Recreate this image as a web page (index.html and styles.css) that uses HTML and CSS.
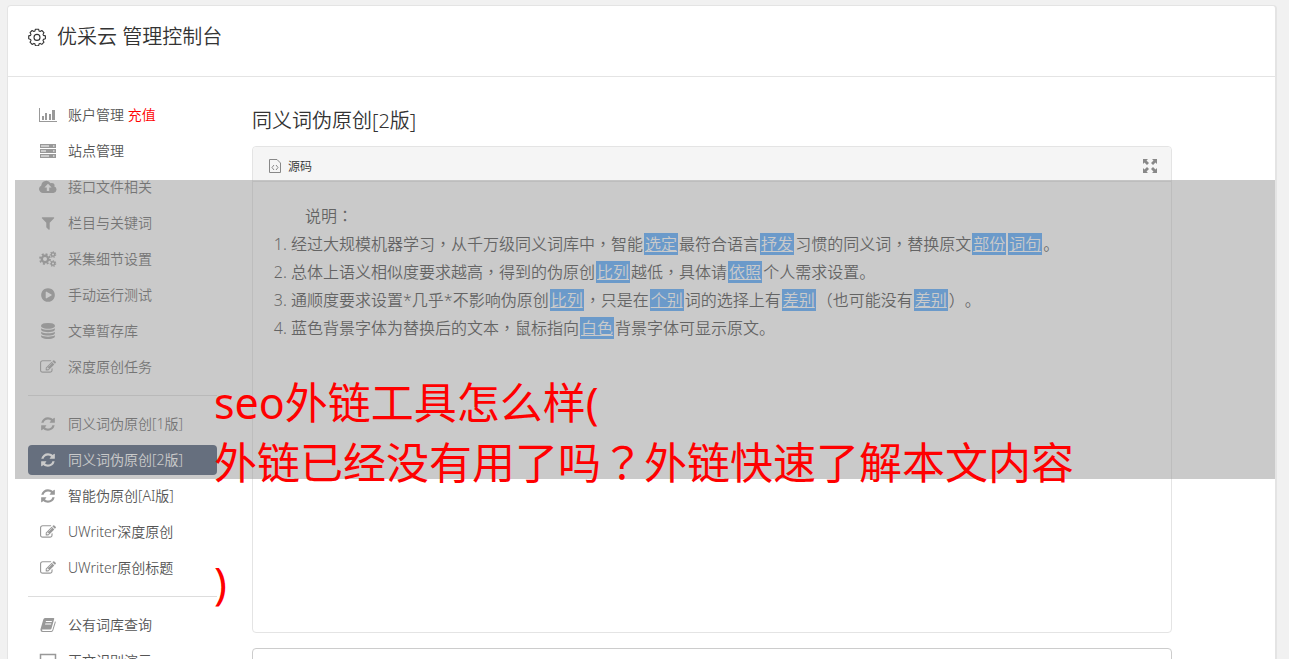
FILE: index.html
```html
<!DOCTYPE html>
<html lang="zh-CN">
<head>
    <meta charset="UTF-8">
    <meta name="viewport" content="width=device-width, initial-scale=1.0">
    <title>优采云 管理控制台</title>
    <link rel="stylesheet" href="styles.css">
</head>
<body>
    <!-- Icons -->
    <svg class="sprite" aria-hidden="true">
        <symbol id="gear" viewBox="0 0 18 18">
            <path fill="none" stroke="currentColor" stroke-width="1.1" stroke-linejoin="round" d="M7.4 1.2h3.2l.5 1.9 1 .4 1.7-1 2.2 2.1-1 1.8.4 1 2 .5v2.9l-2 .6-.4 1 1 1.8-2.2 2.2-1.7-1-1 .4-.5 1.9H7.4l-.5-1.900-1-.400-1.800 1L2 14.200l1-1.800-.4-1-1.900-.600V7.900l1.900-.500.400-1-1-1.800 2.100-2.100 1.800 1 1-.400z"/>
            <circle cx="9" cy="9.400" r="3" fill="none" stroke="currentColor" stroke-width="1.1"/>
        </symbol>
        <symbol id="chart" viewBox="0 0 18 16">
            <path d="M0 1h1v13h17v1H0zM3 9h2v4H3zM6 6h2v7H6zM10 7h2v6h-2zM13 3h3v10h-3z"/>
        </symbol>
        <symbol id="server" viewBox="0 0 16 16">
            <path fill-rule="evenodd" d="M0 1h16v4H0zM1 2.500v1h8v-1zM13 2.500v1h1.500v-1zM0 6h16v4H0zM1 7.500v1h5v-1zM13 7.500v1h1.500v-1zM0 11h16v4H0zM1 12.500v1h8v-1zM13 12.500v1h1.500v-1z"/>
        </symbol>
        <symbol id="cloud" viewBox="0 0 18 16">
            <path fill-rule="evenodd" d="M4 14a4 4 0 0 1-1.700-7.600A5 5 0 0 1 11.600 4.300a2.600 2.600 0 0 1 3.700 3.300A3.300 3.300 0 0 1 14.500 14zM9 4.800L5.400 8.500h2.400V12h2.400V8.500h2.400z"/>
        </symbol>
        <symbol id="filter" viewBox="0 0 1792 1792">
            <path d="M1595 295q17 41-14 70l-493 493v742q0 42-39 59-13 5-25 5-27 0-45-19l-256-256q-19-19-19-45v-486l-493-493q-31-29-14-70 17-39 59-39h1280q42 0 59 39z"/>
        </symbol>
        <symbol id="cogs" viewBox="0 0 18 16">
            <g fill="none" stroke="currentColor">
                <circle cx="6" cy="8" r="3.200" stroke-width="2.400"/>
                <circle cx="6" cy="8" r="5" stroke-width="1.800" stroke-dasharray="2 1.927"/>
                <circle cx="14" cy="3.500" r="1.700" stroke-width="1.400"/>
                <circle cx="14" cy="3.500" r="2.700" stroke-width="1.200" stroke-dasharray="1.300 1.120"/>
                <circle cx="14" cy="12.500" r="1.700" stroke-width="1.400"/>
                <circle cx="14" cy="12.500" r="2.700" stroke-width="1.200" stroke-dasharray="1.300 1.120"/>
            </g>
        </symbol>
        <symbol id="play" viewBox="0 0 1792 1792">
            <path d="M896 128q209 0 385.500 103t279.500 279.500 103 385.500-103 385.500-279.500 279.500-385.500 103-385.500-103-279.500-279.500-103-385.500 103-385.500 279.500-279.500 385.500-103zm384 823q32-18 32-55t-32-55l-544-320q-31-19-64-1-32 19-32 56v640q0 37 32 56 16 8 32 8 17 0 32-9z"/>
        </symbol>
        <symbol id="database" viewBox="0 0 1792 1792">
            <path d="M896 768q237 0 443-43t325-127v170q0 69-103 128t-280 93.500-385 34.500-385-34.500-280-93.500-103-128v-170q119 84 325 127t443 43zm0 768q237 0 443-43t325-127v170q0 69-103 128t-280 93.500-385 34.500-385-34.500-280-93.500-103-128v-170q119 84 325 127t443 43zm0-384q237 0 443-43t325-127v170q0 69-103 128t-280 93.500-385 34.500-385-34.500-280-93.500-103-128v-170q119 84 325 127t443 43zm0-1152q208 0 385 34.500t280 93.500 103 128v128q0 69-103 128t-280 93.500-385 34.500-385-34.500-280-93.500-103-128v-128q0-69 103-128t280-93.500 385-34.500z"/>
        </symbol>
        <symbol id="edit" viewBox="0 0 1792 1792">
            <path d="M888 1184l116-116-152-152-116 116v56h96v96h56zm440-720q-16-16-33 1l-350 350q-17 17-1 33t33-1l350-350q17-17 1-33zm80 594v190q0 119-84.500 203.500t-203.500 84.500h-832q-119 0-203.500-84.500t-84.500-203.500v-832q0-119 84.500-203.500t203.500-84.500h832q63 0 117 25 15 7 18 23 3 17-9 29l-49 49q-14 14-32 8-23-6-45-6h-832q-66 0-113 47t-47 113v832q0 66 47 113t113 47h832q66 0 113-47t47-113v-126q0-13 9-22l64-64q15-15 35-7t20 29zm-96-738l288 288-672 672h-288v-288zm444 132l-92 92-288-288 92-92q28-28 68-28t68 28l152 152q28 28 28 68t-28 68z"/>
        </symbol>
        <symbol id="refresh" viewBox="0 0 1792 1792">
            <path d="M1639 1056q0 5-1 7-64 268-268 434.500t-478 166.500q-146 0-282.500-55t-243.500-157l-129 129q-19 19-45 19t-45-19-19-45v-448q0-26 19-45t45-19h448q26 0 45 19t19 45-19 45l-137 137q71 66 161 102t187 36q134 0 250-65t186-179q11-17 53-117 8-23 30-23h192q13 0 22.500 9.500t9.500 22.500zm25-800v448q0 26-19 45t-45 19h-448q-26 0-45-19t-19-45 19-45l138-138q-148-137-349-137-134 0-250 65t-186 179q-11 17-53 117-8 23-30 23h-199q-13 0-22.500-9.500t-9.500-22.500v-7q65-268 270-434.500t480-166.500q146 0 284 55.500t245 156.500l130-129q19-19 45-19t45 19 19 45z"/>
        </symbol>
        <symbol id="book" viewBox="0 0 16 16">
            <path fill-rule="evenodd" d="M5 1h8.500q1 0 .700 1L11.500 11.500q-.300 1-1.300 1H2.500q-1 0-.500.800.300.700 1 .700h8.300q.700 0 1-.800L15 4.300q1 .300.700 1.300l-2.500 8q-.400 1.400-1.800 1.400H2.600Q.400 15 .400 12.500L3.300 2.500Q3.700 1 5 1zM6 4l-.300 1h6l.300-1zM5.300 6.500l-.300 1h6l.300-1z"/>
        </symbol>
        <symbol id="screen" viewBox="0 0 18 16">
            <path fill="none" stroke="currentColor" stroke-width="1.500" d="M1.500 1.500h15v10h-15zM5 15h8M9 12v3"/>
        </symbol>
        <symbol id="source" viewBox="0 0 12 14">
            <path fill="none" stroke="currentColor" d="M.5.5h7.500l3.500 3.500v9.500H.5zM5 6L3 8.500 5 11M7 6l2 2.500L7 11"/>
        </symbol>
        <symbol id="expand" viewBox="0 0 14 14">
            <path d="M0 0h5L3.500 1.500 6 4 4 6 1.500 3.500 0 5zM14 0v5l-1.500-1.500L10 6 8 4l2.500-2.500L9 0zM0 14V9l1.500 1.500L4 8l2 2-2.500 2.500L5 14zM14 14H9l1.500-1.500L8 10l2-2 2.500 2.500L14 9z"/>
        </symbol>
    </svg>

    <div class="panel">
        <header class="panel-header">
            <svg class="icon-gear"><use href="#gear"/></svg>
            <h1>优采云 管理控制台</h1>
        </header>

        <div class="panel-body">
            <nav class="sidebar">
                <a href="#"><svg><use href="#chart"/></svg><span>账户管理 <em>充值</em></span></a>
                <a href="#"><svg><use href="#server"/></svg>站点管理</a>
                <a href="#"><svg><use href="#cloud"/></svg>接口文件相关</a>
                <a href="#"><svg><use href="#filter"/></svg>栏目与关键词</a>
                <a href="#"><svg><use href="#cogs"/></svg>采集细节设置</a>
                <a href="#"><svg><use href="#play"/></svg>手动运行测试</a>
                <a href="#"><svg><use href="#database"/></svg>文章暂存库</a>
                <a href="#"><svg><use href="#edit"/></svg>深度原创任务</a>
                <hr>
                <a href="#"><svg><use href="#refresh"/></svg>同义词伪原创[1版]</a>
                <a href="#" class="active"><svg><use href="#refresh"/></svg>同义词伪原创[2版]</a>
                <a href="#"><svg><use href="#refresh"/></svg>智能伪原创[AI版]</a>
                <a href="#"><svg><use href="#edit"/></svg>UWriter深度原创</a>
                <a href="#"><svg><use href="#edit"/></svg>UWriter原创标题</a>
                <hr>
                <a href="#"><svg><use href="#book"/></svg>公有词库查询</a>
                <a href="#"><svg><use href="#screen"/></svg>正文识别演示</a>
            </nav>

            <main class="content">
                <h2>同义词伪原创[2版]</h2>
                <div class="editor">
                    <div class="toolbar">
                        <button type="button"><svg class="icon-source"><use href="#source"/></svg>源码</button>
                        <button type="button" aria-label="全屏"><svg class="icon-expand"><use href="#expand"/></svg></button>
                    </div>
                    <div class="editor-text">
                        <p>说明<i>：</i></p>
                        <ol>
                            <li>经过大规模机器学习<i>，</i>从千万级同义词库中<i>，</i>智能<mark>选定</mark>最符合语言<mark>抒发</mark>习惯的同义词<i>，</i>替换原文<mark>部份</mark><mark>词句</mark>。</li>
                            <li>总体上语义相似度要求越高<i>，</i>得到的伪原创<mark>比列</mark>越低<i>，</i>具体请<mark>依照</mark>个人需求设置。</li>
                            <li>通顺度要求设置*几乎*不影响伪原创<mark>比列</mark><i>，</i>只是在<mark>个别</mark>词的选择上有<mark>差别</mark><i>（</i>也可能没有<mark>差别</mark><i>）</i>。</li>
                            <li>蓝色背景字体为替换后的文本<i>，</i>鼠标指向<mark>白色</mark>背景字体可显示原文。</li>
                        </ol>
                    </div>
                </div>
                <textarea class="result" aria-label="结果"></textarea>
            </main>
        </div>

        <div class="shade"></div>
        <div class="caption">
            <p>seo外链工具怎么样(</p>
            <p>外链已经没有用了吗<i>？</i>外链快速了解本文内容</p>
            <p class="caption-end">)</p>
        </div>
    </div>
</body>
</html>
```
FILE: styles.css
```css
* {
    box-sizing: border-box;
}
body {
    margin: 0;
    padding: 5px 12px 0 7px;
    height: 100vh;
    overflow: hidden;
    background-color: #f1f1f1;
    color: #333;
    font-family: "Noto Sans", "Noto Sans CJK SC", sans-serif;
    font-size: 14px;
    text-spacing-trim: space-all;
}
h1, h2 {
    margin: 0;
    font-size: 20px;
    font-weight: 350;
    line-height: 28px;
}
button {
    display: flex;
    align-items: center;
    gap: 7px;
    padding: 0;
    border: 0;
    background: none;
    color: #333;
    font: inherit;
    font-size: 12px;
    font-weight: 350;
}
svg {
    fill: currentColor;
}
/* centered punctuation */
i {
    font-family: "Noto Sans CJK TC", sans-serif;
    font-style: normal;
    line-height: 1;
    -webkit-locale: "zh-TW";
}
.sprite {
    display: none;
}
.panel {
    position: relative;
    border: 1px solid #e4e4e4;
    border-right-width: 2px;
    border-radius: 4px 4px 0 0;
    background-color: white;
}
.panel-header {
    display: flex;
    align-items: center;
    gap: 11px;
    height: 71px;
    padding: 0 20px 8px;
    border-bottom: 1px solid #e4e4e4;
}
.icon-gear {
    width: 18px;
    height: 18px;
}
.panel-body {
    display: flex;
    gap: 35px;
    padding: 23px 20px;
}
.sidebar {
    flex: 0 0 189px;
}
.sidebar a {
    display: flex;
    align-items: center;
    gap: 11px;
    height: 30px;
    margin-bottom: 6px;
    padding-left: 11px;
    border-radius: 4px;
    color: #555;
    font-weight: 350;
    line-height: 18px;
    text-decoration: none;
}
.sidebar svg {
    width: 18px;
    height: 16px;
    color: #999;
}
.sidebar em {
    color: red;
    font-style: normal;
}
.sidebar .active, .sidebar .active svg {
    background-color: #364866;
    color: white;
}
.sidebar hr {
    margin: 13px 0;
    border: 0;
    border-top: 1px solid #ddd;
}
.content {
    flex: 1;
    max-width: 920px;
}
.content h2 {
    margin: 7px 0 11px;
}
.editor {
    min-height: 487px;
    border: 1px solid #e4e4e4;
    border-radius: 4px;
}
.toolbar {
    display: flex;
    justify-content: space-between;
    height: 35px;
    padding: 3px 14px 0 16px;
    border-bottom: 1px solid #e4e4e4;
    border-radius: 4px 4px 0 0;
    background-color: #f5f5f5;
}
.icon-source {
    width: 12px;
    height: 14px;
    color: #888;
}
.icon-expand {
    width: 14px;
    height: 14px;
    color: #888;
}
.editor-text {
    padding: 20px;
    font-size: 16px;
    font-weight: 350;
    line-height: 28px;
}
.editor-text p {
    margin: 0;
    text-indent: 32px;
}
.editor-text ol {
    margin: 0;
    padding-left: 18px;
}
.editor-text mark {
    margin: 0 1px;
    padding: 0 1px;
    background-color: #409eff;
    color: white;
    text-decoration: underline;
}
.result {
    display: block;
    width: 100%;
    height: 200px;
    margin-top: 15px;
    border: 1px solid #ccc;
    border-radius: 4px;
    resize: none;
}

/* Banner over the page */
.shade {
    position: absolute;
    top: 174px;
    left: 7px;
    right: 0;
    height: 299px;
    background-color: rgba(150, 150, 150, 0.5);
}
.caption {
    position: absolute;
    top: 367px;
    left: 206px;
    color: red;
    font-size: 43px;
    line-height: 60px;
}
.caption p {
    margin: 0;
}
.caption .caption-end {
    margin-top: 60px;
}
```
